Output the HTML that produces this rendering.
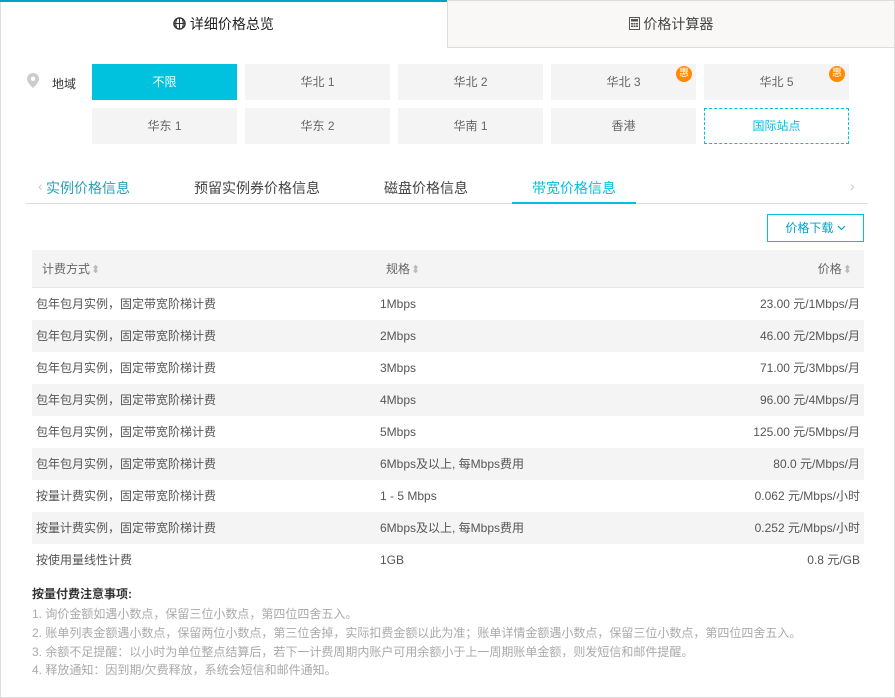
<!DOCTYPE html>
<html><head><meta charset="utf-8"><style>
*{box-sizing:border-box;margin:0;padding:0}
body{width:895px;height:698px;background:#fff;font-family:"Liberation Sans","Noto Sans CJK SC",sans-serif;font-size:12px;color:#333;position:relative;overflow:hidden}
.frame{position:absolute;left:0;top:0;width:895px;height:698px;border:1px solid #ddd;border-top:none}
.t1{position:absolute;left:0;top:0;width:447px;height:47px;border-top:2px solid #00a2ca;text-align:center;line-height:45px;font-size:14px;color:#222}
.t2{position:absolute;left:447px;top:0;width:448px;height:48px;background:#f9f8f7;border:1px solid #ddd;text-align:center;line-height:46px;font-size:14px;color:#444}
.lbl{position:absolute;left:52px;top:75px;font-size:12px;color:#333}
.b{position:absolute;width:145px;height:36px;background:#f4f4f4;color:#666;text-align:center;line-height:36px;font-size:12px}
.on{background:#00c1de;color:#fff}
.dash{background:#fff;border:1px dashed #00c1de;color:#00c1de;line-height:34px}
.hui{position:absolute;right:4px;top:2px;width:16px;height:16px;border-radius:50%;background:#ff8a00;color:#fff;font-size:10px;line-height:16px;text-align:center}
.st{position:absolute;top:178px;font-size:14px;color:#444}
.row{position:absolute;left:32px;width:832px;height:32px;line-height:32px;font-size:12px;color:#555}
.row span{position:absolute}
.c1{left:4px}.c2{left:348px}.c3{right:4px}
.g{background:#f4f4f4}
.n{position:absolute;left:32px;font-size:12px;color:#aaa}
.ar{position:static !important;color:#bbb;font-size:11px;margin-left:1px}
</style></head><body>
<div class="frame"></div>
<div class="t1"><svg width="13" height="13" viewBox="0 0 14 14" style="vertical-align:-1px"><circle cx="7" cy="7" r="6" fill="none" stroke="#333" stroke-width="1.5"/><path d="M1 7h12M7 1v12M4 2.5c-1.5 3-1.5 6 0 9M10 2.5c1.5 3 1.5 6 0 9" stroke="#333" fill="none" stroke-width="1.2"/></svg> 详细价格总览</div>
<div class="t2"><svg width="11" height="13" viewBox="0 0 11 13" style="vertical-align:-1px"><rect x="0.5" y="0.5" width="10" height="12" fill="none" stroke="#555"/><rect x="2" y="2" width="7" height="2.5" fill="#555"/><path d="M2 6h2v1.5H2zM4.5 6h2v1.5h-2zM7 6h2v1.5H7zM2 8.5h2V10H2zM4.5 8.5h2V10h-2zM7 8.5h2V10H7z" fill="#555"/></svg> 价格计算器</div>
<svg style="position:absolute;left:27px;top:73px" width="12" height="15" viewBox="0 0 12 15"><path d="M6 0C2.7 0 0 2.6 0 5.8 0 10 6 15 6 15s6-5 6-9.2C12 2.6 9.3 0 6 0z" fill="#ccc"/><circle cx="6" cy="5.8" r="2.2" fill="#fff"/></svg>
<div class="lbl">地域</div>
<div class="b on" style="left:92px;top:64px">不限</div>
<div class="b" style="left:245px;top:64px">华北 1</div>
<div class="b" style="left:398px;top:64px">华北 2</div>
<div class="b" style="left:551px;top:64px">华北 3<div class="hui">惠</div></div>
<div class="b" style="left:704px;top:64px">华北 5<div class="hui">惠</div></div>
<div class="b" style="left:92px;top:108px">华东 1</div>
<div class="b" style="left:245px;top:108px">华东 2</div>
<div class="b" style="left:398px;top:108px">华南 1</div>
<div class="b" style="left:551px;top:108px">香港</div>
<div class="b dash" style="left:704px;top:108px">国际站点</div>
<div style="position:absolute;left:26px;top:203px;width:842px;height:1px;background:#ddd"></div>
<div class="st" style="left:38px;color:#ccc">‹</div>
<div class="st" style="left:46px;color:#2a9fb5">实例价格信息</div>
<div class="st" style="left:194px">预留实例券价格信息</div>
<div class="st" style="left:384px">磁盘价格信息</div>
<div class="st" style="left:532px;color:#00c1de">带宽价格信息</div>
<div style="position:absolute;left:512px;top:202px;width:124px;height:2px;background:#00c1de"></div>
<div class="st" style="left:850px;color:#ccc">›</div>
<div style="position:absolute;left:767px;top:214px;width:97px;height:28px;border:1px solid #00c1de;color:#00a2ca;text-align:center;line-height:26px">价格下载 <svg width="9" height="6" viewBox="0 0 9 6" style="vertical-align:1px"><path d="M1 1l3.5 3.5L8 1" stroke="#00a2ca" fill="none" stroke-width="1.2"/></svg></div>
<div class="row g" style="top:250px;height:38px;line-height:38px;color:#666;border-bottom:1px solid #e6e6e6"><span class="c1" style="left:10px">计费方式<span class="ar">⬍</span></span><span class="c2" style="left:354px">规格<span class="ar">⬍</span></span><span class="c3" style="right:12px">价格<span class="ar">⬍</span></span></div>
<div class="row" style="top:288px"><span class="c1">包年包月实例，固定带宽阶梯计费</span><span class="c2">1Mbps</span><span class="c3">23.00 元/1Mbps/月</span></div>
<div class="row g" style="top:320px"><span class="c1">包年包月实例，固定带宽阶梯计费</span><span class="c2">2Mbps</span><span class="c3">46.00 元/2Mbps/月</span></div>
<div class="row" style="top:352px"><span class="c1">包年包月实例，固定带宽阶梯计费</span><span class="c2">3Mbps</span><span class="c3">71.00 元/3Mbps/月</span></div>
<div class="row g" style="top:384px"><span class="c1">包年包月实例，固定带宽阶梯计费</span><span class="c2">4Mbps</span><span class="c3">96.00 元/4Mbps/月</span></div>
<div class="row" style="top:416px"><span class="c1">包年包月实例，固定带宽阶梯计费</span><span class="c2">5Mbps</span><span class="c3">125.00 元/5Mbps/月</span></div>
<div class="row g" style="top:448px"><span class="c1">包年包月实例，固定带宽阶梯计费</span><span class="c2">6Mbps及以上, 每Mbps费用</span><span class="c3">80.0 元/Mbps/月</span></div>
<div class="row" style="top:480px"><span class="c1">按量计费实例，固定带宽阶梯计费</span><span class="c2">1 - 5 Mbps</span><span class="c3">0.062 元/Mbps/小时</span></div>
<div class="row g" style="top:512px"><span class="c1">按量计费实例，固定带宽阶梯计费</span><span class="c2">6Mbps及以上, 每Mbps费用</span><span class="c3">0.252 元/Mbps/小时</span></div>
<div class="row" style="top:544px"><span class="c1">按使用量线性计费</span><span class="c2">1GB</span><span class="c3">0.8 元/GB</span></div>
<div class="n" style="top:585px;color:#333;font-weight:bold">按量付费注意事项:</div>
<div class="n" style="top:605px">1. 询价金额如遇小数点，保留三位小数点，第四位四舍五入。</div>
<div class="n" style="top:624px">2. 账单列表金额遇小数点，保留两位小数点，第三位舍掉，实际扣费金额以此为准；账单详情金额遇小数点，保留三位小数点，第四位四舍五入。</div>
<div class="n" style="top:643px">3. 余额不足提醒：以小时为单位整点结算后，若下一计费周期内账户可用余额小于上一周期账单金额，则发短信和邮件提醒。</div>
<div class="n" style="top:661px">4. 释放通知：因到期/欠费释放，系统会短信和邮件通知。</div>
</body></html>
